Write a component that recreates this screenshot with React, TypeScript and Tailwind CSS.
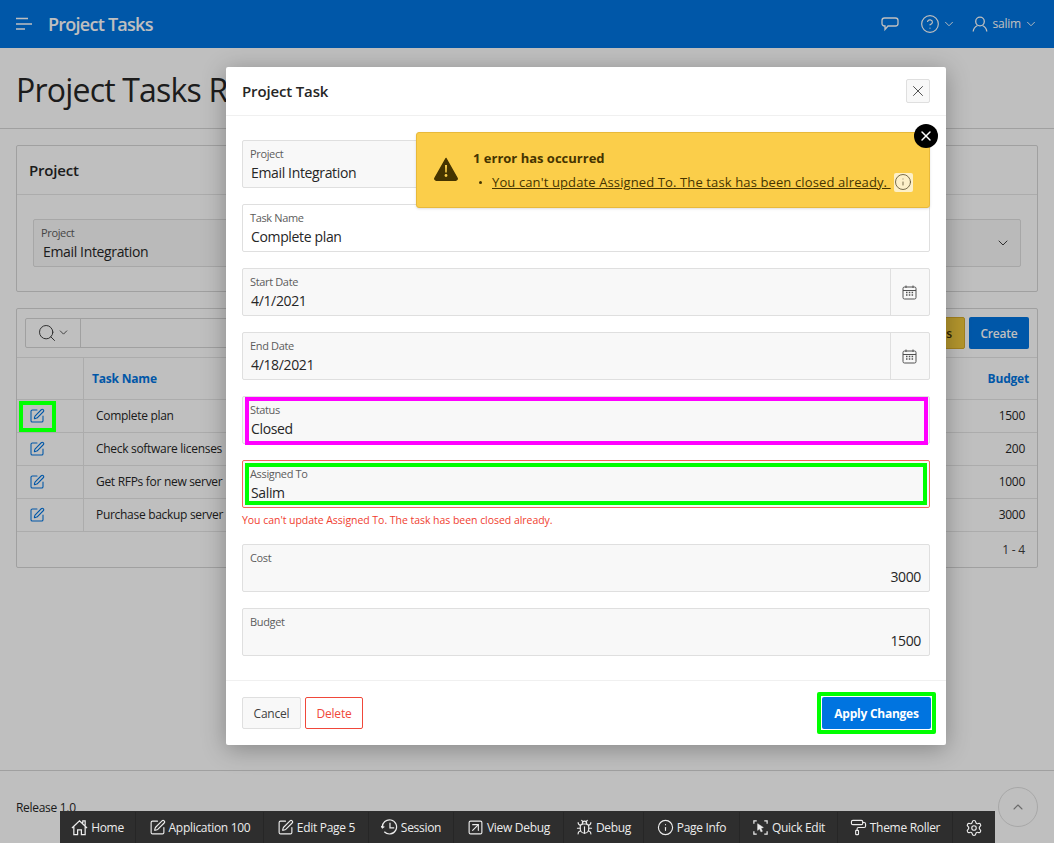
import {
  Bug,
  ChevronDown,
  ChevronUp,
  CircleHelp,
  Info,
  PaintRoller,
  Search,
  Settings,
  SquareArrowUpRight,
  SquarePen,
  X,
} from "lucide-react";

const tasks = [
  { name: "Complete plan", budget: "1500" },
  { name: "Check software licenses", budget: "200" },
  { name: "Get RFPs for new server", budget: "1000" },
  { name: "Purchase backup server", budget: "3000" },
];

function HomeIcon({ className }: { className?: string }) {
  return (
    <svg className={className} viewBox="0 0 18 18" fill="none" stroke="currentColor" strokeWidth="1.3">
      <path d="M1 9.500 9 2l8 7.500M3 8v8.500h4v-5h4v5h4V8M12.500 4.500V2H15v4.800" />
    </svg>
  );
}

function SessionIcon({ className }: { className?: string }) {
  return (
    <svg className={className} viewBox="0 0 18 18" fill="none" stroke="currentColor" strokeWidth="1.3">
      <path d="M3.500 13.500A7.500 7.500 0 1 0 1.500 9M0 7.500l1.500 2 2-1.500M9.500 4v5.500H14" />
    </svg>
  );
}

function QuickEditIcon({ className }: { className?: string }) {
  return (
    <svg className={className} viewBox="0 0 18 18" fill="none" stroke="currentColor" strokeWidth="1.3">
      <path d="M5 2H2v3M13 2h3v3M2 13v3h3M16 13v3h-3" />
      <path d="M6 5l6 4-2.500.7L11 13l-1.500.6-1.500-3.200L6 12z" fill="currentColor" strokeWidth="0.6" />
    </svg>
  );
}

function CalendarIcon() {
  return (
    <svg className="size-[15px] text-[#505050]" viewBox="0 0 15 15" fill="none" stroke="currentColor" strokeWidth="1">
      <rect x="1" y="2" width="13" height="12" rx="1.500" />
      <path d="M1 5.500h13M4 0.500V3M11 0.500V3" />
      <path d="M4 7.500h1.500M6.800 7.500h1.500M9.600 7.500h1.500M4 10h1.500M6.800 10h1.500M9.600 10h1.500" strokeWidth="1.400" />
    </svg>
  );
}

const devTools = [
  { label: "Home", icon: HomeIcon, w: "w-[76px]" },
  { label: "Application 100", icon: SquarePen, w: "w-[128px]" },
  { label: "Edit Page 5", icon: SquarePen, w: "w-[105px]" },
  { label: "Session", icon: SessionIcon, w: "w-[85px]" },
  { label: "View Debug", icon: SquareArrowUpRight, w: "w-[110px]" },
  { label: "Debug", icon: Bug, w: "w-[80px]" },
  { label: "Page Info", icon: Info, w: "w-[96px]" },
  { label: "Quick Edit", icon: QuickEditIcon, w: "w-[98px]" },
  { label: "Theme Roller", icon: PaintRoller, w: "w-[115px]" },
];

function Field({
  label,
  value,
  right,
  white,
  error,
  calendar,
  highlight,
}: {
  label: string;
  value: string;
  right?: boolean;
  white?: boolean;
  error?: boolean;
  calendar?: boolean;
  highlight?: "status" | "assigned";
}) {
  return (
    <div
      className={`relative flex h-12 rounded-[2px] border ${error ? "border-[#f5675a]" : "border-[#dfdfdf]"} ${white ? "bg-white" : "bg-[#f8f8f8]"}`}
    >
      <div className="min-w-0 flex-1 pl-2 pr-2">
        <div className="-ml-px h-[20px] pt-[5px] text-[11px] leading-[16px] tracking-[-0.35px] text-[#5c5c5c]">{label}</div>
        <div className={`mt-[2px] text-[14px] leading-[20px] tracking-[-0.35px] text-[#262626] ${right ? "text-right" : ""}`}>
          {value}
        </div>
      </div>
      {calendar && (
        <div className="flex w-[39px] items-center justify-center border-l border-[#dfdfdf] pr-px">
          <CalendarIcon />
        </div>
      )}
      {highlight === "status" && (
        <div className="absolute -bottom-[2px] left-[2px] right-px top-0 border-4 border-[#ff00ff]" />
      )}
      {highlight === "assigned" && (
        <div className="absolute bottom-[2px] left-[2px] right-[2px] top-[2px] border-4 border-[#00ff00]" />
      )}
    </div>
  );
}

export default function App() {
  return (
    <div
      className="relative h-[843px] w-[1054px] overflow-hidden bg-[#ffffff] text-[#262626]"
      style={{ fontFamily: '"Open Sans", "Noto Sans", sans-serif' }}
    >
      {/* page behind the dialog */}
      <header className="flex h-12 items-center bg-[#0074e0] text-white">
        <svg className="ml-4 size-4" viewBox="0 0 16 16" fill="none" stroke="currentColor" strokeWidth="1.6">
          <path d="M0 2.500h12M0 8h16M0 13h9" />
        </svg>
        <div className="ml-4 text-[18px] font-semibold tracking-[-0.75px]">Project Tasks</div>
        <div className="ml-auto flex items-center pr-[16px]">
          <svg className="size-[18px]" viewBox="0 0 18 18" fill="none" stroke="currentColor" strokeWidth="1.3">
            <path d="M3.500 3h11C16 3 17 4 17 5.500v3c0 1.500-1 2.500-2.500 2.500H7l-3 3.500V11H3.500C2 11 1 10 1 8.500v-3C1 4 2 3 3.500 3z" />
          </svg>
          <CircleHelp className="ml-[21px] size-[20px]" strokeWidth={1.4} />
          <ChevronDown className="ml-[2px] size-[14px]" strokeWidth={1.6} />
          <svg className="ml-[16px] size-[16px]" viewBox="0 0 16 16" fill="none" stroke="currentColor" strokeWidth="1.3">
            <circle cx="8" cy="5.500" r="4.300" />
            <path d="M5.500 9.500C3.500 10.500 1.500 12 1.200 15.500M10.500 9.500c2 1 4 2.500 4.300 6" />
          </svg>
          <span className="ml-[4px] text-[12px] tracking-[-0.2px]">salim</span>
          <ChevronDown className="ml-[3px] size-[14px]" strokeWidth={1.6} />
        </div>
      </header>

      <div className="h-[81px] border-b border-[#d6d6d6] bg-white pl-4 pt-[19px] text-[32px] font-normal leading-[46px] tracking-[-0.8px] text-[#262626]">
        Project Tasks Report
      </div>

      <div className="bg-[#ffffff] px-4 pt-4">
        <section className="h-[147px] rounded-[2px] border border-[#d6d6d6]">
          <div className="flex h-[49px] items-center border-b border-[#e6e6e6] pl-3 text-[15px] font-semibold tracking-[-0.2px]">Project</div>
          <div className="mx-4 mt-6 flex h-12 rounded-[2px] border border-[#dfdfdf] bg-[#f8f8f8] pl-[7px] pr-[9px]">
            <div className="flex-1">
              <div className="pt-[5px] text-[11px] leading-[16px] tracking-[-0.35px] text-[#5c5c5c]">Project</div>
              <div className="ml-[2px] mt-[1px] text-[14px] leading-[20px] tracking-[-0.35px]">Email Integration</div>
            </div>
            <ChevronDown className="mt-[15px] size-[16px] text-[#404040]" strokeWidth={1.5} />
          </div>
        </section>

        <section className="mt-4 h-[260px] rounded-[2px] border border-[#d6d6d6]">
          <div className="flex h-[49px] items-center border-b border-[#e6e6e6] pl-2 pr-2">
            <div className="mb-px flex h-[30px] flex-1 rounded-[2px] border border-[#d6d6d6]">
              <div className="flex w-[55px] items-center justify-center border-r border-[#d6d6d6]">
                <Search className="size-[20px] text-[#404040]" strokeWidth={1.2} />
                <ChevronDown className="size-[13px] text-[#404040]" strokeWidth={1.6} />
              </div>
            </div>
            <div className="ml-1 mr-1 flex h-[32px] w-[78px] items-center justify-end rounded-[2px] border border-[#d9ac2a] bg-[#f0c83c] pr-3 pt-px text-[12px] font-semibold text-[#3d2f00]">
              Actions
            </div>
            <div className="flex h-[32px] w-[60px] items-center justify-center rounded-[2px] bg-[#0074e0] pt-px text-[12px] font-semibold tracking-[-0.2px] text-white">
              Create
            </div>
          </div>
          <div className="flex h-[42px] border-b border-[#e6e6e6]">
            <div className="w-[67px] border-r border-[#e6e6e6]" />
            <div className="flex flex-1 items-center justify-between pl-2 pr-2 text-[12px] font-bold tracking-[-0.2px] text-[#0074e0]">
              <span>Task Name</span>
              <span>Budget</span>
            </div>
          </div>
          {tasks.map((task) => (
            <div key={task.name} className="flex h-[33px] border-b border-[#e6e6e6]">
              <div className="flex w-[67px] items-center border-r border-[#e6e6e6] pl-3">
                <SquarePen className="size-[16px] text-[#0074e0]" strokeWidth={1.6} />
              </div>
              <div className="flex flex-1 items-center justify-between pl-3 pr-3 text-[12px] tracking-[-0.3px]">
                <span>{task.name}</span>
                <span>{task.budget}</span>
              </div>
            </div>
          ))}
          <div className="pr-3 pt-[9px] text-right text-[12px] tracking-[-0.2px] text-[#404040]">1 - 4</div>
        </section>
      </div>

      <footer className="relative mt-[202px] h-[80px] border-t border-[#d6d6d6] pl-4 pt-[28px] text-[12px] tracking-[-0.3px]">
        Release 1.0
        <div className="absolute left-[998px] top-[16px] flex size-10 items-center justify-center rounded-full border border-[#e0e0e0]">
          <ChevronUp className="size-[16px] text-[#909090]" strokeWidth={1.6} />
        </div>
      </footer>

      {/* dialog overlay */}
      <div className="absolute inset-0 bg-black/25" />

      {/* annotation on the first edit link, painted above the dim layer */}
      <div className="absolute left-[19px] top-[401px] h-[31px] w-[37px] border-4 border-[#00ff00]" />

      <div className="absolute left-[226px] top-[67px] w-[720px] rounded-[2px] bg-white shadow-[0_4px_24px_rgba(0,0,0,0.3)]">
        <div className="flex h-[49px] items-center justify-between border-b border-[#f0f0f0] pl-4 pr-4">
          <div className="pt-px text-[15px] font-semibold tracking-[-0.15px]">Project Task</div>
          <div className="flex size-6 items-center justify-center rounded-[2px] border border-[#dfdfdf] bg-[#f8f8f8]">
            <X className="size-[18px] text-[#404040]" strokeWidth={1.2} />
          </div>
        </div>

        <div className="flex flex-col gap-4 px-4 pb-6 pt-6">
          <Field label="Project" value="Email Integration" />
          <Field label="Task Name" value="Complete plan" white />
          <Field label="Start Date" value="4/1/2021" calendar />
          <Field label="End Date" value="4/18/2021" calendar />
          <Field label="Status" value="Closed" highlight="status" />
          <div>
            <Field label="Assigned To" value="Salim" error highlight="assigned" />
            <div className="h-5 pt-[5px] text-[10.500px] leading-[15px] tracking-[-0.04px] text-[#f03e2f]">
              You can't update Assigned To. The task has been closed already.
            </div>
          </div>
          <Field label="Cost" value="3000" right />
          <Field label="Budget" value="1500" right />
        </div>

        <div className="flex h-[65px] items-start justify-between border-t border-[#f0f0f0] pl-4 pr-[15px] pt-4">
          <div className="flex gap-1">
            <div className="flex h-8 w-[59px] items-center justify-center rounded-[2px] border border-[#dfdfdf] bg-[#f8f8f8] pt-px text-[12px] tracking-[-0.2px] text-[#404040]">
              Cancel
            </div>
            <div className="flex h-8 w-[58px] items-center justify-center rounded-[2px] border border-[#f0483a] bg-white pt-px text-[12px] tracking-[-0.2px] text-[#f0483a]">
              Delete
            </div>
          </div>
          <div className="relative flex h-8 w-[109px] items-center justify-center rounded-[2px] bg-[#0074e0] pt-[2px] text-[12px] font-bold tracking-[-0.25px] text-white">
            Apply Changes
            <div className="absolute -inset-[5px] rounded-[2px] border-4 border-[#00ff00]" />
          </div>
        </div>
      </div>

      {/* error notification */}
      <div className="absolute left-[416px] top-[132px] flex h-[76px] w-[514px] rounded-[3px] border border-[#e8b93a] bg-[#fbce4a] shadow-sm">
        <div className="flex w-[56px] items-center justify-center pb-[2px] pl-[1px]">
          <svg className="h-[24px] w-[24px]" viewBox="0 0 24 24">
            <path d="M12 1.500 23 21a1.500 1.500 0 0 1-1.300 2.200H2.300A1.500 1.500 0 0 1 1 21z" fill="#453400" stroke="#453400" strokeWidth="1.500" strokeLinejoin="round" />
            <path d="M11 8h2l-.3 7.500h-1.400z" fill="#fbce4a" />
            <circle cx="12" cy="18.500" r="1.400" fill="#fbce4a" />
          </svg>
        </div>
        <div className="pt-[15px] text-[#453400]">
          <div className="text-[13px] font-bold leading-[20px]">1 error has occurred</div>
          <div className="mt-[4px] flex items-center">
            <span className="ml-[6px] mr-[10px] size-[3px] rounded-full bg-[#453400]" />
            <span className="text-[13px] leading-[20px] tracking-[0.12px] underline">
              You can't update Assigned To. The task has been closed already.&nbsp;
            </span>
            <span className="ml-[3px] flex size-[19px] items-center justify-center rounded-[2px] bg-[#fdf0c8]">
              <Info className="size-[18px] text-[#5c5030]" strokeWidth={1.1} />
            </span>
          </div>
        </div>
        <div className="absolute -right-[9px] -top-[9px] flex size-6 items-center justify-center rounded-full bg-black">
          <X className="size-[16px] text-white" strokeWidth={2.2} />
        </div>
      </div>

      {/* developer toolbar */}
      <div className="absolute bottom-0 left-[60px] flex h-[32px] w-[935px] items-center bg-[#2e2e2e] pt-px text-[12px] tracking-[-0.3px] text-[#ececec]">
        {devTools.map(({ label, icon: Icon, w }) => (
          <div key={label} className={`flex h-full items-center justify-center gap-[3px] border-r border-[#262626] ${w}`}>
            <Icon className="size-[17px]" strokeWidth={1.6} />
            <span>{label}</span>
          </div>
        ))}
        <div className="flex flex-1 items-center justify-center">
          <Settings className="size-[18px]" strokeWidth={1.5} />
        </div>
      </div>
    </div>
  );
}
